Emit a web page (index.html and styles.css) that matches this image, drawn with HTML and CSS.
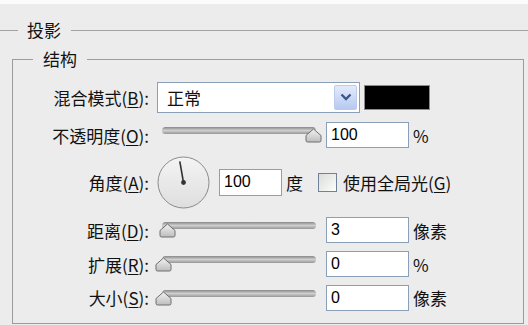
FILE: index.html
```html
<!DOCTYPE html>
<html lang="zh-CN">
<head>
    <meta charset="UTF-8">
    <meta name="viewport" content="width=device-width, initial-scale=1.0">
    <title>投影</title>
    <link rel="stylesheet" href="styles.css">
</head>
<body>
    <div class="panel">
        <div class="section-title"><span>投影</span></div>

        <fieldset class="group">
            <legend>结构</legend>

            <div class="row row-blend">
                <label class="label">混合模式(<u>B</u>):</label>
                <div class="select">
                    <span class="select-value">正常</span>
                    <span class="select-btn">
                        <svg width="12" height="8" viewBox="0 0 12 8"><path d="M1.5 1.5 L6 6 L10.5 1.5" fill="none" stroke="#3d5588" stroke-width="2.4"/></svg>
                    </span>
                </div>
                <span class="swatch"></span>
            </div>

            <div class="row row-opacity">
                <label class="label">不透明度(<u>O</u>):</label>
                <div class="slider">
                    <span class="track"></span>
                    <svg class="thumb" style="left: 148px" width="17" height="15" viewBox="0 0 17 15"><path d="M8.5 1 L16 7.5 V12.5 Q16 14 14.5 14 H2.5 Q1 14 1 12.5 V7.5 Z" fill="url(#thumbFill)" stroke="#6f6f6f"/></svg>
                </div>
                <input class="field" type="text" value="100">
                <span class="unit">%</span>
            </div>

            <div class="row row-angle">
                <label class="label">角度(<u>A</u>):</label>
                <svg class="dial" width="53" height="53" viewBox="0 0 53 53">
                    <defs>
                        <linearGradient id="dialFill" x1="0" y1="0" x2="0" y2="1">
                            <stop offset="0" stop-color="#f4f4f4"/>
                            <stop offset="1" stop-color="#dedede"/>
                        </linearGradient>
                        <linearGradient id="thumbFill" x1="0" y1="0" x2="0" y2="1">
                            <stop offset="0" stop-color="#f2f2f2"/>
                            <stop offset="1" stop-color="#bdbdbd"/>
                        </linearGradient>
                    </defs>
                    <circle cx="26.5" cy="26.5" r="25.5" fill="url(#dialFill)" stroke="#8a8a8a"/>
                    <line x1="26.5" y1="26.5" x2="22.8" y2="5.3" stroke="#333" stroke-width="1.6"/>
                    <circle cx="26.5" cy="26.5" r="2.4" fill="#333"/>
                </svg>
                <input class="field field-short" type="text" value="100">
                <span class="unit">度</span>
                <span class="checkbox"></span>
                <span class="check-label">使用全局光(<u>G</u>)</span>
            </div>

            <div class="row row-distance">
                <label class="label">距离(<u>D</u>):</label>
                <div class="slider">
                    <span class="track"></span>
                    <svg class="thumb" style="left: 2px" width="17" height="15" viewBox="0 0 17 15"><path d="M8.5 1 L16 7.5 V12.5 Q16 14 14.5 14 H2.5 Q1 14 1 12.5 V7.5 Z" fill="url(#thumbFill)" stroke="#6f6f6f"/></svg>
                </div>
                <input class="field" type="text" value="3">
                <span class="unit">像素</span>
            </div>

            <div class="row">
                <label class="label">扩展(<u>R</u>):</label>
                <div class="slider">
                    <span class="track"></span>
                    <svg class="thumb" style="left: -2px" width="17" height="15" viewBox="0 0 17 15"><path d="M8.5 1 L16 7.5 V12.5 Q16 14 14.5 14 H2.5 Q1 14 1 12.5 V7.5 Z" fill="url(#thumbFill)" stroke="#6f6f6f"/></svg>
                </div>
                <input class="field" type="text" value="0">
                <span class="unit">%</span>
            </div>

            <div class="row row-last">
                <label class="label">大小(<u>S</u>):</label>
                <div class="slider">
                    <span class="track"></span>
                    <svg class="thumb" style="left: -2px" width="17" height="15" viewBox="0 0 17 15"><path d="M8.5 1 L16 7.5 V12.5 Q16 14 14.5 14 H2.5 Q1 14 1 12.5 V7.5 Z" fill="url(#thumbFill)" stroke="#6f6f6f"/></svg>
                </div>
                <input class="field" type="text" value="0">
                <span class="unit">像素</span>
            </div>
        </fieldset>
    </div>
</body>
</html>
```

FILE: styles.css
```css
* {
    padding: 0;
    margin: 0;
    box-sizing: border-box;
}
body {
    width: 100%;
    height: 100vh;
    overflow: hidden;
    background: #ececec;
    border-top: 4px solid #fbfbfb;
    font-family: "Noto Sans CJK SC", "Liberation Sans", sans-serif;
    font-size: 17px;
    color: #111;
}
.section-title {
    display: flex;
    align-items: center;
    height: 24px;
    margin-top: 14px;
    line-height: 24px;
}
.section-title::before,
.section-title::after {
    content: "";
    border-top: 1px solid #a3a3a3;
}
.section-title::before {
    width: 18px;
}
.section-title::after {
    flex: 1;
}
.section-title span {
    padding: 0 10px 0 9px;
}
.group {
    margin: 5px 4px 0 12px;
    padding: 9px 0 9px 0;
    border: 1px solid #9c9c9c;
}
.group legend {
    margin-left: 20px;
    padding: 0 10px;
    line-height: 24px;
}
.row {
    display: flex;
    align-items: center;
    height: 34px;
}
.row-opacity {
    height: 42px;
}
.row-angle {
    height: 52px;
}
.row-distance {
    margin-top: 5px;
}
.row-last {
    height: 33px;
}
.label {
    width: 136px;
    text-align: right;
    margin-right: 8px;
    white-space: nowrap;
}
u {
    text-underline-offset: 2px;
}
.select {
    display: flex;
    align-items: center;
    justify-content: space-between;
    width: 203px;
    height: 31px;
    padding: 2px 2px 2px 9px;
    background: #fff;
    border: 1px solid #8aa0b8;
}
.select-btn {
    display: flex;
    align-items: center;
    justify-content: center;
    width: 23px;
    height: 100%;
    border: 1px solid #bccbec;
    border-radius: 2px;
    background: linear-gradient(#e3eafb, #b7c9f1);
}
.swatch {
    width: 66px;
    height: 25px;
    margin-left: 4px;
    background: #000;
    border: 1px solid #8c8c8c;
}
.slider {
    position: relative;
    width: 165px;
    height: 16px;
}
.track {
    display: block;
    width: 154px;
    height: 7px;
    margin-left: 5px;
    border-radius: 4px;
    background: linear-gradient(#888, #cfcfcf 50%, #969696);
}
.thumb {
    position: absolute;
    top: 1px;
}
.field {
    width: 83px;
    height: 26px;
    margin-left: 4px;
    padding: 0 4px;
    border: 1px solid #8aa0b8;
    background: #fff;
    font-family: "Liberation Sans", sans-serif;
    font-size: 16px;
    color: #000;
}
.field-short {
    width: 63px;
    height: 27px;
    margin-left: 9px;
}
.unit {
    margin-left: 4px;
}
.checkbox {
    width: 19px;
    height: 19px;
    margin-left: 15px;
    border: 1px solid #6e829c;
    background: linear-gradient(135deg, #d9ddd8, #fdfdfd);
}
.check-label {
    margin-left: 6px;
}
```
